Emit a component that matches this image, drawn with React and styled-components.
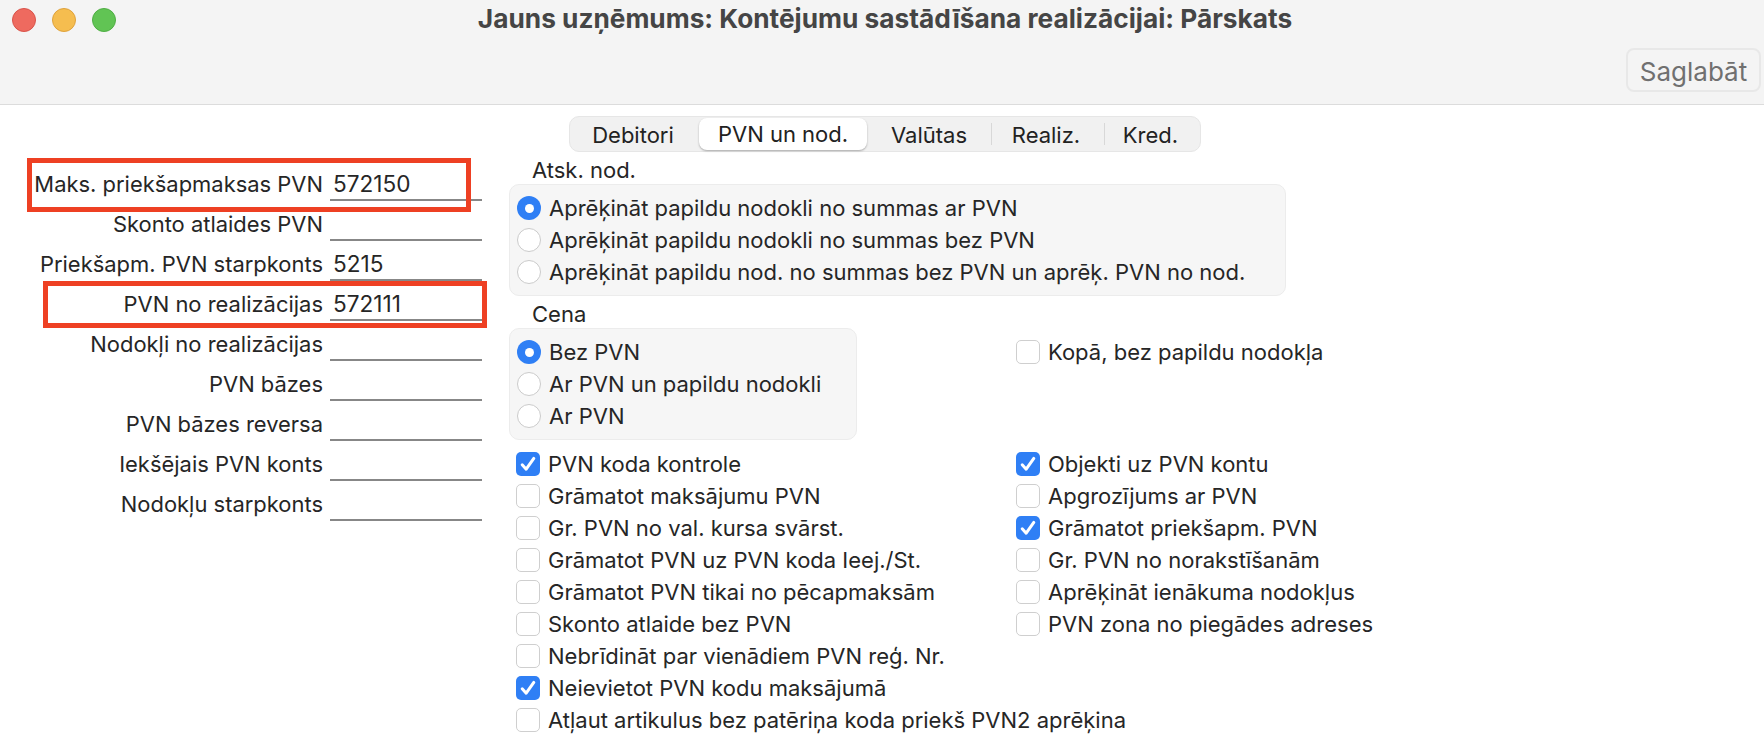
import React from "react";
import styled, { createGlobalStyle } from "styled-components";

const GlobalStyle = createGlobalStyle`
  html, body { margin: 0; padding: 0; background: #fff; overflow: hidden; }
  body { font-family: Inter, "Noto Sans", sans-serif; font-size: 22px; color: #262626; }
`;

const Win = styled.div`
  width: 1764px;
  height: 754px;
  position: relative;
  overflow: hidden;
`;

const Header = styled.header`
  height: 104px;
  box-sizing: content-box;
  background: #f4f4f4;
  border-bottom: 1px solid #dcdcdc;
  display: flex;
  flex-direction: column;
`;

const TitleRow = styled.div`
  height: 40px;
  display: flex;
  align-items: center;
  padding-left: 12px;
`;

const Lights = styled.div`
  display: flex;
  gap: 16px;
`;

const Light = styled.span`
  width: 24px;
  height: 24px;
  border-radius: 50%;
  box-sizing: border-box;
  background: ${(p) => p.$c};
  border: 1px solid ${(p) => p.$b};
`;

const Title = styled.h1`
  flex: 1;
  margin: -3px 0 0 -110px;
  text-align: center;
  font-size: 26.25px;
  font-weight: 700;
  color: #454545;
`;

const Tools = styled.div`
  display: flex;
  justify-content: flex-end;
  padding: 8px 3px 0 0;
`;

const SaveBtn = styled.button`
  width: 135px;
  height: 44px;
  box-sizing: border-box;
  background: #f4f4f4;
  border: 2px solid #e8e8e8;
  border-radius: 8px;
  font: 400 26px Inter, sans-serif;
  color: #707070;
  padding: 2px 0 0;
`;

const TabRow = styled.div`
  display: flex;
  padding: 11px 0 0 569px;
`;

const Tabs = styled.div`
  display: grid;
  grid-template-columns: 129px 168px 124px 113px 96px;
  height: 36px;
  box-sizing: border-box;
  background: #f1f1f1;
  border: 1px solid #e6e6e6;
  border-radius: 10px;
  align-items: center;
`;

const Tab = styled.div`
  height: ${(p) => (p.$active ? "32px" : "22px")};
  line-height: ${(p) => (p.$active ? "33px" : "24px")};
  padding-right: ${(p) => p.$nudge}px;
  text-align: center;
  font-size: 22px;
  color: #222;
  background: ${(p) => (p.$active ? "#fff" : "transparent")};
  border-radius: ${(p) => (p.$active ? "8px" : "0")};
  box-shadow: ${(p) => (p.$active ? "0 1px 2px rgba(0,0,0,.3)" : "none")};
  border-left: ${(p) => (p.$sep ? "1px solid #d8d8d8" : "none")};
`;

const Content = styled.main`
  display: flex;
  padding-top: 7px;
`;

const LeftForm = styled.div`
  width: 509px;
  padding-top: 2px;
  box-sizing: border-box;
`;

const FormRow = styled.div`
  display: grid;
  grid-template-columns: 323px 152px;
  column-gap: 7px;
  height: 40px;
  box-sizing: border-box;
  align-items: center;
  padding-top: 8px;
`;

const FormLabel = styled.label`
  text-align: right;
  white-space: nowrap;
  font-size: 21.95px;
  line-height: 30px;
  padding-bottom: 2px;
`;

const FormValue = styled.div`
  height: 32px;
  line-height: 29px;
  padding-left: 3px;
  box-sizing: border-box;
  font-size: 22.6px;
  border-bottom: 2px solid #878787;
`;

const RightCol = styled.div`
  display: flex;
  flex-direction: column;
`;

const GroupTitle = styled.div`
  height: 25px;
  line-height: 23px;
  padding-left: 23px;
`;

const Group = styled.div`
  box-sizing: border-box;
  width: ${(p) => p.$w}px;
  padding: 7px;
  background: #f6f6f6;
  border: 1px solid #ececec;
  border-radius: 10px;
`;

const OptionRow = styled.div`
  height: 32px;
  display: flex;
  align-items: center;
  gap: 8px;
  white-space: nowrap;
`;

const Radio = styled.span`
  width: 24px;
  height: 24px;
  flex: none;
  box-sizing: border-box;
  border-radius: 50%;
  display: flex;
  align-items: center;
  justify-content: center;
  background: ${(p) => (p.$on ? "#2f7ff5" : "#fff")};
  border: ${(p) => (p.$on ? "none" : "1px solid #cbcbcb")};
  &::after {
    content: "";
    display: ${(p) => (p.$on ? "block" : "none")};
    width: 9px;
    height: 9px;
    border-radius: 50%;
    background: #fff;
  }
`;

const CheckBox = styled.span`
  width: 24px;
  height: 24px;
  flex: none;
  box-sizing: border-box;
  border-radius: 5px;
  display: flex;
  align-items: center;
  justify-content: center;
  background: ${(p) => (p.$on ? "#2f7ff5" : "#fff")};
  border: ${(p) => (p.$on ? "none" : "1px solid #cfcfcf")};
`;

const CenaRow = styled.div`
  display: flex;
  margin-top: 7px;
`;

const CenaLeft = styled.div`
  width: 507px;
`;

const KopaSlot = styled.div`
  padding-top: 33px;
`;

const CheckCols = styled.div`
  display: flex;
  margin-top: 8px;
  padding-left: 7px;
`;

const CheckCol = styled.div`
  width: ${(p) => p.$w}px;
`;

const Mark = styled.span`
  position: absolute;
  box-sizing: border-box;
  left: ${(p) => p.$x}px;
  top: ${(p) => p.$y}px;
  width: ${(p) => p.$w}px;
  height: ${(p) => p.$h}px;
  border: 5px solid #ee4023;
  pointer-events: none;
`;

const fields = [
  ["Maks. priekšapmaksas PVN", "572150"],
  ["Skonto atlaides PVN", ""],
  ["Priekšapm. PVN starpkonts", "5215"],
  ["PVN no realizācijas", "572111"],
  ["Nodokļi no realizācijas", ""],
  ["PVN bāzes", ""],
  ["PVN bāzes reversa", ""],
  ["Iekšējais PVN konts", ""],
  ["Nodokļu starpkonts", ""],
];

const tabs = [
  { label: "Debitori", nudge: 3 },
  { label: "PVN un nod.", nudge: 0, active: true },
  { label: "Valūtas", nudge: 0 },
  { label: "Realiz.", nudge: 4, sep: true },
  { label: "Kred.", nudge: 4, sep: true },
];

const atsk = [
  "Aprēķināt papildu nodokli no summas ar PVN",
  "Aprēķināt papildu nodokli no summas bez PVN",
  "Aprēķināt papildu nod. no summas bez PVN un aprēķ. PVN no nod.",
];

const cena = ["Bez PVN", "Ar PVN un papildu nodokli", "Ar PVN"];

const checksLeft = [
  ["PVN koda kontrole", true],
  ["Grāmatot maksājumu PVN"],
  ["Gr. PVN no val. kursa svārst."],
  ["Grāmatot PVN uz PVN koda Ieej./St."],
  ["Grāmatot PVN tikai no pēcapmaksām"],
  ["Skonto atlaide bez PVN"],
  ["Nebrīdināt par vienādiem PVN reģ. Nr."],
  ["Neievietot PVN kodu maksājumā", true],
  ["Atļaut artikulus bez patēriņa koda priekš PVN2 aprēķina"],
];

const checksRight = [
  ["Objekti uz PVN kontu", true],
  ["Apgrozījums ar PVN"],
  ["Grāmatot priekšapm. PVN", true],
  ["Gr. PVN no norakstīšanām"],
  ["Aprēķināt ienākuma nodokļus"],
  ["PVN zona no piegādes adreses"],
];

const Tick = () => (
  <svg width="20" height="20" viewBox="0 0 20 20">
    <path d="M4.2 10.8 L8.2 15.2 L15.8 4.4" fill="none" stroke="#fff" strokeWidth="3" strokeLinecap="round" strokeLinejoin="round" />
  </svg>
);

const Check = ({ label, on }) => (
  <OptionRow>
    <CheckBox $on={on}>{on && <Tick />}</CheckBox>
    {label}
  </OptionRow>
);

const RadioList = ({ items }) =>
  items.map((t, i) => (
    <OptionRow key={t}>
      <Radio $on={i === 0} />
      {t}
    </OptionRow>
  ));

export default function App() {
  return (
    <Win>
      <GlobalStyle />
      <Header>
        <TitleRow>
          <Lights>
            <Light $c="#ee6a5f" $b="#d9534a" />
            <Light $c="#f5bd4f" $b="#dfa23c" />
            <Light $c="#61c454" $b="#4fae44" />
          </Lights>
          <Title>Jauns uzņēmums: Kontējumu sastādīšana realizācijai: Pārskats</Title>
        </TitleRow>
        <Tools>
          <SaveBtn>Saglabāt</SaveBtn>
        </Tools>
      </Header>
      <TabRow>
        <Tabs>
          {tabs.map((t) => (
            <Tab key={t.label} $active={t.active} $sep={t.sep} $nudge={t.nudge}>
              {t.label}
            </Tab>
          ))}
        </Tabs>
      </TabRow>
      <Content>
        <LeftForm>
          {fields.map(([label, value]) => (
            <FormRow key={label}>
              <FormLabel>{label}</FormLabel>
              <FormValue>{value}</FormValue>
            </FormRow>
          ))}
        </LeftForm>
        <RightCol>
          <GroupTitle>Atsk. nod.</GroupTitle>
          <Group $w={777}>
            <RadioList items={atsk} />
          </Group>
          <CenaRow>
            <CenaLeft>
              <GroupTitle>Cena</GroupTitle>
              <Group $w={348}>
                <RadioList items={cena} />
              </Group>
            </CenaLeft>
            <KopaSlot>
              <Check label="Kopā, bez papildu nodokļa" />
            </KopaSlot>
          </CenaRow>
          <CheckCols>
            <CheckCol $w={500}>
              {checksLeft.map(([t, on]) => (
                <Check key={t} label={t} on={on} />
              ))}
            </CheckCol>
            <CheckCol $w={400}>
              {checksRight.map(([t, on]) => (
                <Check key={t} label={t} on={on} />
              ))}
            </CheckCol>
          </CheckCols>
        </RightCol>
      </Content>
      <Mark $x={27} $y={158} $w={444} $h={54} />
      <Mark $x={43} $y={281} $w={444} $h={47} />
    </Win>
  );
}
